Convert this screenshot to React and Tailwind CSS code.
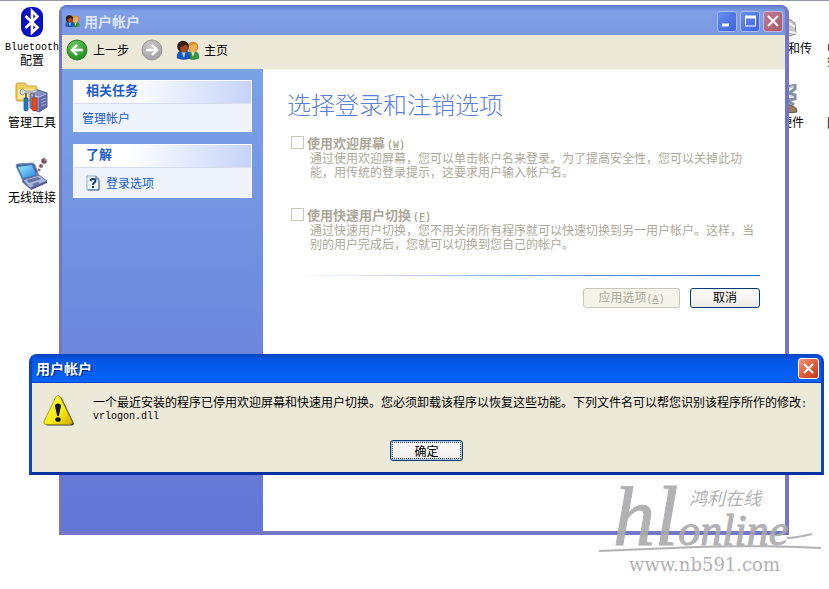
import React from "react";

const cjk = "font-['Noto_Sans_CJK_SC',sans-serif]";

function Mono({ children, className = "" }) {
  return (
    <span className={`font-['Liberation_Mono','Noto_Sans_CJK_SC',monospace] text-[10px] leading-3 ${className}`}>
      {children}
    </span>
  );
}

function BluetoothIcon() {
  return (
    <svg width="24" height="32" viewBox="0 0 24 32">
      <rect x="1" y="1" width="22" height="30" rx="9" fill="#0b0fc4" />
      <path d="M5.500 10L17.500 21.500L12 26.500V5L17.500 10.500L5.500 22" fill="none" stroke="#fff" strokeWidth="2.600" />
    </svg>
  );
}

function AdminToolsIcon() {
  return (
    <svg width="34" height="31" viewBox="0 0 34 31">
      <path d="M1 3q0-2 2-2h7l2 3h8q2 0 2 2v13H3q-2 0-2-2z" fill="#f0ce5c" stroke="#c9a240" />
      <path d="M3 7h18v10H3z" fill="#ffe994" />
      <path d="M15 12l8-4 9 3v14l-8 5-9-4z" fill="#8690ca" stroke="#53609f" />
      <path d="M24 14l8-3v14l-8 5z" fill="#5e68a8" />
      <path d="M16 13l8 2 7-3" fill="none" stroke="#c5cdf0" />
      <path d="M26 18l5-2M26 21l5-2M26 24l5-2" stroke="#a5aee0" />
      <path d="M5 10q0-3 3-3l2 2h8l4-2v3l-4 1h-8l-2 2q-3 0-3-3z" fill="#d6d9dc" stroke="#85898f" strokeWidth="0.800" />
      <path d="M11 11v5M19 11v5" stroke="#777" strokeWidth="2" />
      <path d="M9 16h4v12q-2 2-4 0z" fill="#2479c3" stroke="#12518e" strokeWidth="0.700" />
      <path d="M17 16h5v12q-2 2-5 0z" fill="#e44b1d" stroke="#a92e0c" strokeWidth="0.700" />
    </svg>
  );
}

function LaptopIcon() {
  return (
    <svg width="34" height="32" viewBox="0 0 34 32">
      <defs>
        <linearGradient id="screen" x1="0" y1="0" x2="1" y2="1">
          <stop offset="0" stopColor="#a2e5ff" />
          <stop offset="1" stopColor="#2389df" />
        </linearGradient>
      </defs>
      <path d="M1 8q0-2 2-2l14-1q2 0 3 2l4 11-16 5z" fill="#4569a4" stroke="#7890bf" />
      <path d="M3 9l14-2 4 10-13 3z" fill="url(#screen)" />
      <path d="M8 22l16-5 8 6-17 7z" fill="#aab6db" stroke="#6a77ad" />
      <path d="M12 22l11-3 3 2-12 4zM17 26l6-2 2 1-6 3z" fill="#6674a5" />
      <path d="M8 22l7 8v1l-8-7z" fill="#53629b" />
      <path d="M15 30l17-7v2l-16 7z" fill="#515b8d" />
      <circle cx="29" cy="3" r="2.700" fill="#704b51" />
      <circle cx="26" cy="8" r="2" fill="#8d5c64" />
      <circle cx="24" cy="12" r="1.600" fill="#9c6a70" />
      <circle cx="22" cy="16" r="1.100" fill="#a77c80" />
      <circle cx="30" cy="2" r="1" fill="#c4a1a1" />
    </svg>
  );
}

function PeopleIcon({ className }) {
  return (
    <svg className={className} viewBox="0 0 24 20">
      <path d="M11 18q0-7 6-7 6 0 6 7-6 3-12 0z" fill="#399344" stroke="#226a2b" strokeWidth="0.500" />
      <path d="M15 11h4l-2 6z" fill="#dff3d0" />
      <circle cx="17" cy="7" r="5.300" fill="#cf8628" />
      <ellipse cx="17" cy="7.500" rx="4.200" ry="4.800" fill="#f0ae55" />
      <path d="M13 5q3 0 5-2 2 0 3 2" fill="none" stroke="#d98e2a" strokeWidth="1.500" />
      <path d="M1 18q0-8 7-8 6 0 6 8-6 3-13 0z" fill="#1755c4" stroke="#123c90" strokeWidth="0.500" />
      <path d="M5 11h5l-2 7z" fill="#a9cffa" />
      <circle cx="7" cy="6.500" r="5.800" fill="#2c1712" />
      <ellipse cx="8" cy="8" rx="4" ry="4.500" fill="#a34724" />
      <path d="M4 6q3 0 5-3 2 1 3 3" fill="none" stroke="#2c1712" strokeWidth="1.800" />
    </svg>
  );
}

function ArrowIcon({ forward }) {
  return (
    <svg width="22" height="22" viewBox="0 0 22 22">
      <defs>
        <radialGradient id={forward ? "grayBall" : "greenBall"} cx="0.400" cy="0.300" r="0.700">
          <stop offset="0" stopColor={forward ? "#cccccc" : "#77ce69"} />
          <stop offset="1" stopColor={forward ? "#a1a1a1" : "#218a21"} />
        </radialGradient>
      </defs>
      <circle cx="11" cy="11" r="10" fill={forward ? "url(#grayBall)" : "url(#greenBall)"} stroke={forward ? "#9b9b99" : "#23852a"} />
      <path
        d={forward ? "M5 11h11M11 6l5 5-5 5" : "M17 11H6M11 6l-5 5 5 5"}
        fill="none"
        stroke="#fff"
        strokeWidth="2.400"
      />
    </svg>
  );
}

function HelpIcon() {
  return (
    <svg width="14" height="16" viewBox="0 0 14 16">
      <path d="M1 1h9l3 3v11H1z" fill="#eaf5ff" stroke="#8baed5" />
      <path d="M10 1v3h3M13 5v10H2" fill="none" stroke="#42658f" />
      <path d="M4.500 6q.3-2 2.500-2t2.500 1.800q0 1.400-1.500 2.100-1 .6-1 2" fill="none" stroke="#16376f" strokeWidth="1.900" />
      <rect x="6" y="11" width="2" height="2" fill="#16376f" />
    </svg>
  );
}

function WarningIcon() {
  return (
    <svg width="32" height="32" viewBox="0 0 32 32">
      <defs>
        <linearGradient id="warning" x1="0" y1="0" x2="1" y2="1">
          <stop offset="0" stopColor="#ffff58" />
          <stop offset="0.600" stopColor="#f8e912" />
          <stop offset="1" stopColor="#d1a900" />
        </linearGradient>
      </defs>
      <path d="M16 1.500q2 0 3 2l11.500 24q1 3-2 3H5q-3 0-2-3l11-24q1-2 2-2z" fill="#36332d" />
      <path d="M15 0.500q1.500 0 2.500 2l11.500 24q1 3-2 3H3q-3 0-2-3l11.500-24q1-2 2.500-2z" fill="url(#warning)" stroke="#a09222" strokeWidth="0.800" />
      <path d="M12 11q0-2.500 3-2.500t3 2.500l-2.200 10h-1.600z" fill="#171507" />
      <ellipse cx="15" cy="24.500" rx="2.700" ry="2.300" fill="#171507" />
    </svg>
  );
}

function DesktopItem({ icon, children }) {
  return (
    <div className="flex flex-col items-center text-center">
      {icon}
      <div className="whitespace-nowrap">{children}</div>
    </div>
  );
}

const winButton =
  "flex h-[21px] w-5 items-center justify-center rounded-[3px] border";

function TaskBox({ title, children }) {
  return (
    <section className="border border-white bg-[#eff3fb]">
      <h2 className="border-b border-[#d5dcf0] bg-linear-to-r from-white from-30% to-[#c6d3f7] pb-1 pl-3 text-[13px] leading-[18px] font-bold text-[#215dc6]">
        {title}
      </h2>
      {children}
    </section>
  );
}

function Option({ id, label, accessKey, children }) {
  return (
    <div>
      <div className="flex h-[15px] gap-[3px]">
        <input
          id={id}
          type="checkbox"
          disabled
          className="size-[13px] shrink-0 appearance-none border border-[#cac8bb] bg-white"
        />
        <label htmlFor={id} className="text-[13px] leading-[13px] font-bold">
          {label}
          <Mono className="ml-0.5">
            (<u>{accessKey}</u>)
          </Mono>
        </label>
      </div>
      <p className="pl-[19px] leading-[14px]">{children}</p>
    </div>
  );
}

function AccountsWindow() {
  return (
    <main className="absolute top-[5px] right-10 bottom-[54px] left-[59px] flex flex-col rounded-t-lg border-r-4 border-b-4 border-l-[3px] border-[#7377c5] bg-[#7b99e1] shadow-[inset_0_1px_0_#5b6cb5]">
      <header className="flex h-[30px] shrink-0 items-center rounded-t-md bg-linear-to-b from-[#5d76c8] via-[#809fe8] via-20% to-[#7b98e0] pt-0.5 pr-0.5 pl-[3px]">
        <PeopleIcon className="h-[14px] w-[15px]" />
        <h1 className="ml-1 flex-1 text-[14px] leading-5 font-bold text-[#dbe5fb]">用户帐户</h1>
        <div className="flex gap-[3px]">
          <button aria-label="最小化" className={`${winButton} border-[#a9bdf5] bg-linear-to-br from-[#6a8df0] to-[#3d62dc]`}>
            <svg width="18" height="18"><path d="M4 13h7" stroke="#fff" strokeWidth="3" /></svg>
          </button>
          <button aria-label="最大化" className={`${winButton} border-[#a9bdf5] bg-linear-to-br from-[#6a8df0] to-[#3d62dc]`}>
            <svg width="18" height="18"><path d="M4.500 4v10h10V4" stroke="#fff" fill="none" /><path d="M4 5h11" stroke="#fff" strokeWidth="3" /></svg>
          </button>
          <button aria-label="关闭" className={`${winButton} border-[#c5b3dd] bg-linear-to-br from-[#bc7e94] to-[#a65769]`}>
            <svg width="18" height="18"><path d="M4 4l10 10M14 4L4 14" stroke="#fff" strokeWidth="2" /></svg>
          </button>
        </div>
      </header>

      <nav className="flex h-[34px] shrink-0 items-center bg-[#ece9d8] pb-1 pl-1">
        <button className="flex items-center gap-[5px]">
          <ArrowIcon />
          上一步
        </button>
        <button aria-label="前进" disabled className="ml-3">
          <ArrowIcon forward />
        </button>
        <button className="ml-[13px] flex items-center gap-1">
          <PeopleIcon className="h-5 w-6" />
          主页
        </button>
      </nav>

      <div className="flex min-h-0 flex-1">
        <aside className="flex w-[201px] shrink-0 flex-col gap-3 bg-linear-to-b from-[#7ba2e7] to-[#6375d6] px-[11px] pt-[11px] text-[#215dc6]">
          <TaskBox title="相关任务">
            <a href="#accounts" className="block pl-2 leading-[27px]">管理帐户</a>
          </TaskBox>
          <TaskBox title="了解">
            <a href="#options" className="flex items-center gap-1.5 pl-3 leading-[29px]">
              <HelpIcon />
              登录选项
            </a>
          </TaskBox>
        </aside>

        <form className="min-w-0 flex-1 overflow-hidden bg-white pt-[19px] pr-[25px] pl-6 text-[#aca899]">
          <h2 className="text-[24px] leading-8 font-light text-[#5a80dc]">选择登录和注销选项</h2>
          <div className="mt-4 flex flex-col gap-[29px] pl-1">
            <Option id="welcome" label="使用欢迎屏幕" accessKey="W">
              通过使用欢迎屏幕，您可以单击帐户名来登录。为了提高安全性，您可以关掉此功能，用传统的登录提示，这要求用户输入帐户名。
            </Option>
            <Option id="switching" label="使用快速用户切换" accessKey="F">
              通过快速用户切换，您不用关闭所有程序就可以快速切换到另一用户帐户。这样，当别的用户完成后，您就可以切换到您自己的帐户。
            </Option>
          </div>
          <div className="mt-6 ml-3 h-px bg-linear-to-r from-white via-[#7c9fe0] to-[#2860c0]" />
          <div className="mt-3 flex justify-end gap-2.5">
            <button type="button" disabled className="h-5 w-[97px] rounded-[3px] border border-[#c9c7ba] bg-[#f5f4ea] pb-0.5 leading-4">
              应用选项<Mono>(<u>A</u>)</Mono>
            </button>
            <button type="button" className="h-5 w-[70px] rounded-[3px] border border-[#003c74] bg-linear-to-b from-white to-[#ecebe6] pb-0.5 leading-4 text-black">
              取消
            </button>
          </div>
        </form>
      </div>
    </main>
  );
}

function Watermark() {
  return (
    <div className="absolute right-1.5 bottom-3 h-[96px] w-[226px] text-[#aaaaac] opacity-90">
      <svg className="absolute inset-0" width="226" height="96" viewBox="0 0 226 96">
        <path d="M2 70Q46 68 100 66T224 67M190 57q8 0 25-4" fill="none" stroke="currentColor" strokeWidth="2" />
      </svg>
      <div className="absolute bottom-[18px] left-4 flex items-baseline font-['Liberation_Serif',serif] leading-none italic [-webkit-text-stroke:1px]">
        <span className="text-[84px]">hl</span>
        <span className="text-[44px]">online</span>
      </div>
      <div className="absolute top-1.5 left-[92px] font-['Noto_Sans_CJK_SC',sans-serif] text-[18px] leading-5 italic">鸿利在线</div>
      <div className="absolute bottom-0.5 left-8 font-['DejaVu_Serif',serif] text-[18px] leading-5">www.nb591.com</div>
    </div>
  );
}

function MessageDialog() {
  return (
    <div
      role="dialog"
      aria-labelledby="dialog-title"
      className="absolute top-[354px] right-[5px] left-[29px] rounded-t-lg border-x-[3px] border-b-[3px] border-x-[#0845cf] border-b-[#0832a4] bg-[#0855dd]"
    >
      <header className="flex h-[29px] items-center justify-between rounded-t-md border-b border-[#0a3fc0] bg-linear-to-b from-[#0843b8] via-[#0557e5] via-20% to-[#0563fb] pr-0.5 pl-1">
        <h2 id="dialog-title" className="text-[14px] leading-5 font-bold text-white [text-shadow:1px_1px_1px_#00227a]">用户帐户</h2>
        <button aria-label="关闭" className="flex size-[21px] items-center justify-center rounded-[3px] border border-white bg-linear-to-br from-[#ed987c] via-[#e35f3b] to-[#be3916]">
          <svg width="17" height="17"><path d="M4 4l9 9M13 4L4 13" stroke="#fff" strokeWidth="2" /></svg>
        </button>
      </header>
      <div className="flex flex-col items-center bg-[#ece9d8] pb-[11px]">
        <div className="flex w-full gap-[18px] pt-3 pl-[11px]">
          <WarningIcon />
          <p className="min-w-0 flex-1 leading-[14px]">
            <span className="block whitespace-nowrap">
              一个最近安装的程序已停用欢迎屏幕和快速用户切换。您必须卸载该程序以恢复这些功能。下列文件名可以帮您识别该程序所作的修改<Mono>:</Mono>
            </span>
            <Mono className="block">vrlogon.dll</Mono>
          </p>
        </div>
        <button className="mt-[13px] h-[21px] w-[73px] rounded-[3px] border border-[#003c74] bg-linear-to-b from-white to-[#ecebe6] p-px shadow-[inset_0_0_0_1px_#a8c2ee]">
          <span className="block border border-dotted border-[#444] leading-[15px]">确定</span>
        </button>
      </div>
    </div>
  );
}

export default function App() {
  return (
    <div className={`relative h-screen overflow-hidden bg-white text-[12px] leading-[14px] text-black shadow-[inset_0_1px_0_#9299a8] ${cjk}`}>
      <div className="absolute top-1.5 left-1 flex w-14 flex-col items-center">
        <DesktopItem icon={<BluetoothIcon />}>
          <Mono className="mt-1 block">Bluetooth</Mono>
          <span className="block leading-3">配置</span>
        </DesktopItem>
        <div className="mt-4 flex flex-col gap-[29px]">
          <DesktopItem icon={<AdminToolsIcon />}><span className="mt-0.5 block">管理工具</span></DesktopItem>
          <DesktopItem icon={<LaptopIcon />}><span className="block">无线链接</span></DesktopItem>
        </div>
      </div>

      <div className="absolute top-3.5 left-[780px] flex w-8 flex-col items-end">
        <svg width="32" height="26" viewBox="0 0 32 26">
          <path d="M6 3l9 6 1 11-10 3z" fill="#c8c8c5" stroke="#898989" />
          <path d="M6 7l9 6M6 17l10 2" stroke="#f5f5ef" strokeWidth="2" />
        </svg>
        <span className="leading-4">和传</span>
        <svg className="mt-7 self-start" width="20" height="30" viewBox="0 0 20 30">
          <path d="M5 4l10-3v4l-6 4 6 2v4l-8 1 7 5" fill="none" stroke="#8791a6" strokeWidth="3" />
          <path d="M6 19l10 5 1 4-10 1z" fill="#9b805b" stroke="#60554b" />
          <path d="M8 4l6-2M9 12l5 1" stroke="#d6dbe4" />
        </svg>
        <span className="self-start leading-4">硬件</span>
      </div>
      <div className="absolute top-[41px] right-0 flex w-0.5 flex-col overflow-hidden whitespace-nowrap">
        <span>中</span>
        <span className="leading-3">如</span>
        <span className="mt-12 leading-4">因</span>
      </div>

      <AccountsWindow />
      <Watermark />
      <MessageDialog />
    </div>
  );
}
